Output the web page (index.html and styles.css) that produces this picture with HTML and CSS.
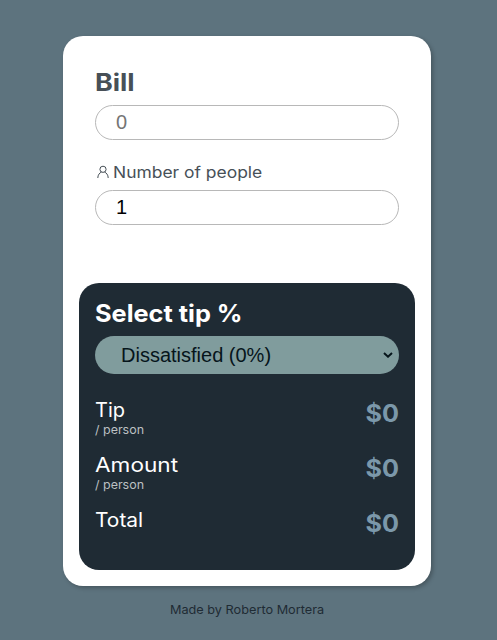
FILE: index.html
```html
<!DOCTYPE html>
<html lang="en">
<head>
<meta charset="utf-8">
<title>Tip calculator</title>
<link rel="stylesheet" href="styles.css">
</head>
<body>
<main class="card">
  <form class="inputs">
    <label class="title bill" for="bill">Bill</label>
    <input class="field" id="bill" type="text" placeholder="0">
    <label class="people" for="people">
      <svg class="person" viewBox="0 0 12 14" fill="none" stroke="currentColor"><circle cx="6" cy="4.3" r="3.1"/><path d="M.8 13c0-3.2 1.9-5.2 3.7-6M7.500 7c1.800.8 3.700 2.800 3.700 6"/></svg>
      <span class="people-text">Number of people</span>
    </label>
    <input class="field" id="people" type="text" value="1">
  </form>
  <section class="panel">
    <label class="title select-title" for="tip">Select tip %</label>
    <div class="select-wrap">
      <select class="select" id="tip"><option>Dissatisfied (0%)</option></select>
      <svg class="chevron" viewBox="0 0 10 6" fill="none" stroke="currentColor"><path d="M1 1l4 3.700L9 1"/></svg>
    </div>
    <div class="results">
      <div class="row"><div><div class="name">Tip</div><div class="per">/ person</div></div><strong class="value">$0</strong></div>
      <div class="row"><div><div class="name amount">Amount</div><div class="per">/ person</div></div><strong class="value">$0</strong></div>
      <div class="row"><div><div class="name total">Total</div></div><strong class="value">$0</strong></div>
    </div>
  </section>
</main>
<footer class="footer">Made by Roberto Mortera</footer>
</body>
</html>
```
FILE: styles.css
```css
* { box-sizing: border-box; }
body {
  margin: 0;
  height: 640px;
  padding: 36px 66px 0 63px;
  overflow: hidden;
  background: #5d737e;
  font-family: Inter, sans-serif;
  color: #475057;
}
.card {
  display: flex;
  flex-direction: column;
  justify-content: space-between;
  height: 550px;
  padding: 32px 16px 16px;
  border-radius: 20px;
  background: #fff;
  box-shadow: 2px 2px 4px rgba(0, 0, 0, .25);
}
.inputs { display: flex; flex-direction: column; padding: 0 16px; }
.title { font-size: 24px; font-weight: 700; line-height: 29px; white-space: nowrap; transform-origin: left; }
.bill { align-self: flex-start; margin-bottom: 8px; transform: scaleX(1.12); }
.field {
  width: 100%;
  height: 35px;
  padding: 0 20px;
  border: 1px solid #b8b8b8;
  border-radius: 20px;
  background: #fff;
  font: 20px "Liberation Sans", Arial, sans-serif;
  color: #000;
}
.field::placeholder { color: #757575; }
.people {
  display: flex;
  align-items: center;
  gap: 4px;
  height: 20px;
  margin: 22px 0 8px;
  padding-left: 2px;
  font-size: 16px;
  white-space: nowrap;
}
.people-text { transform: scaleX(1.09); transform-origin: left; }
.person { width: 12px; height: 14px; }
.panel {
  height: 287px;
  padding: 16px;
  border-radius: 20px;
  background: #1f2b34;
  color: #fff;
}
.select-title { display: block; margin-bottom: 8px; transform: scaleX(1.055); }
.select-wrap { display: grid; align-items: center; }
.select {
  grid-area: 1 / 1;
  width: 100%;
  height: 38px;
  padding: 0 26px;
  border: 0;
  border-radius: 20px;
  appearance: none;
  background: #809c9d;
  color: #06151b;
  font: 20px "Liberation Sans", Arial, sans-serif;
}
.chevron {
  grid-area: 1 / 1;
  justify-self: end;
  width: 10px;
  height: 6px;
  margin-right: 6px;
  color: #06151b;
  stroke-width: 2;
  pointer-events: none;
}
.results { display: grid; gap: 16px; margin-top: 24px; }
.row { display: flex; justify-content: space-between; height: 39px; }
.name { font-size: 20px; line-height: 24px; transform-origin: left; }
.amount { transform: scaleX(1.13); }
.total { transform: scaleX(1.045); }
.per { font-size: 12px; line-height: 15px; color: #bcc0c3; transform: scaleX(1.04); transform-origin: left; }
.value { padding-top: 1px; font-size: 24px; line-height: 29px; color: #7b98aa; transform: scaleX(1.05); transform-origin: right; }
.footer {
  margin-top: 16px;
  text-align: center;
  font-size: 12px;
  line-height: 15px;
  color: #1f2b34;
  transform: scaleX(1.06);
}
```
